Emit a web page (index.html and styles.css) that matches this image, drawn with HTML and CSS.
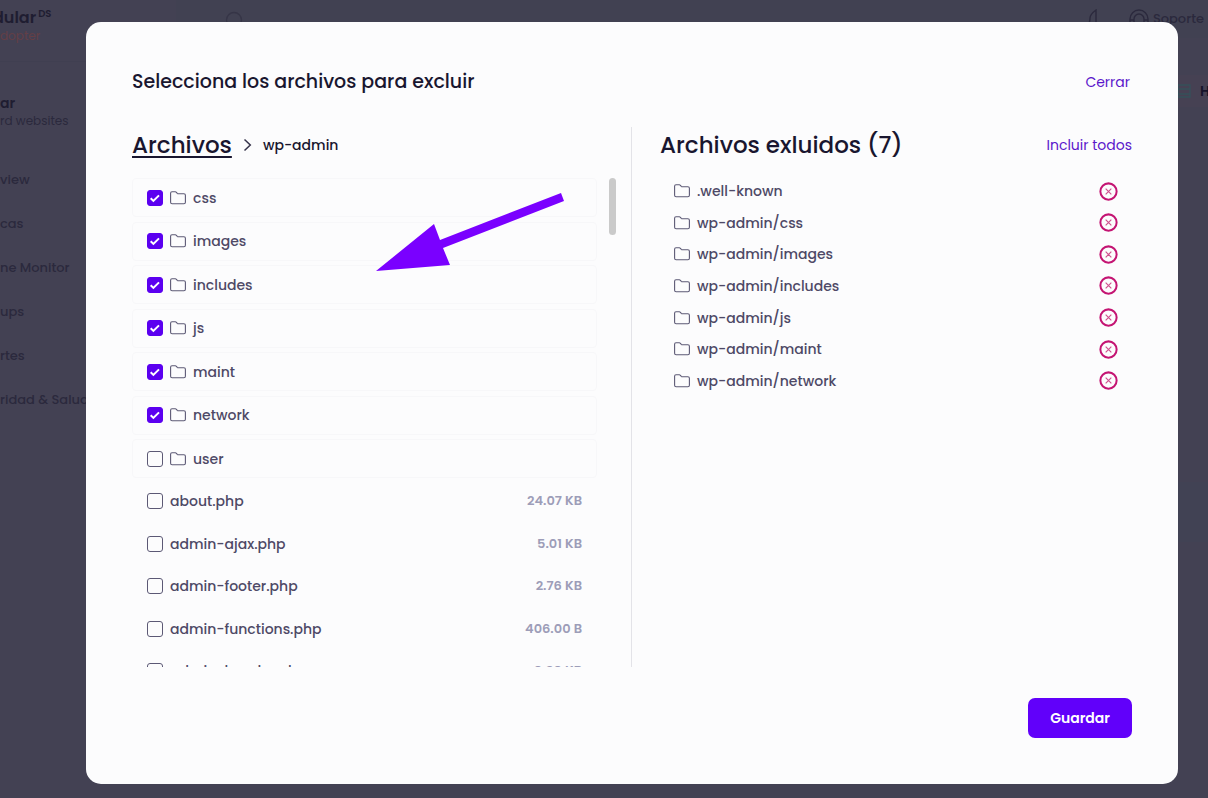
FILE: index.html
```html
<!DOCTYPE html>
<html lang="es">
<head>
<meta charset="utf-8">
<meta name="viewport" content="width=device-width, initial-scale=1">
<title>Selecciona los archivos para excluir</title>
<link rel="stylesheet" href="styles.css">
</head>
<body>
<svg class="defs" aria-hidden="true">
  <symbol id="folder" viewBox="0 0 16 14"><path d="M.6 11.2V2.3C.6 1.4 1.2.8 2 .8h3.3c.5 0 .8.2 1.1.5l.9 1c.3.3.6.4 1 .4h5.6c.9 0 1.5.6 1.5 1.5v7c0 .9-.6 1.6-1.5 1.6H2.1c-.9 0-1.5-.7-1.5-1.6z" fill="none" stroke="currentColor" stroke-width="1.1"/></symbol>
  <symbol id="remove" viewBox="0 0 18 18"><circle cx="9" cy="9" r="7.7" fill="none" stroke="#c41573" stroke-width="1.9"/><path d="M6.3 6.3l5.4 5.4M11.7 6.3l-5.4 5.4" fill="none" stroke="#d0528f" stroke-width="1.1"/></symbol>
</svg>

<div class="app">
  <aside class="sidebar">
    <div class="brand"><div class="brand-name">dular<sup>DS</sup></div><div class="brand-tag">dopter</div></div>
    <div class="team"><strong>ar</strong><span>rd websites</span></div>
    <nav class="nav">
      <a href="#">view</a>
      <a href="#">cas</a>
      <a href="#">ne Monitor</a>
      <a href="#">ups</a>
      <a href="#">rtes</a>
      <a href="#">ridad &amp; Salud</a>
    </nav>
  </aside>
  <div class="main">
    <header class="topbar">
      <svg class="search-icon" width="20" height="20" viewBox="0 0 20 20"><circle cx="10" cy="11" r="7.5" fill="none" stroke="currentColor" stroke-width="1.3"/></svg>
      <svg class="bell" width="16" height="20" viewBox="0 0 16 20"><path d="M1 16c3-1 3-4 3-7s2-5 6-8v15" fill="none" stroke="currentColor" stroke-width="1.4"/></svg>
      <a class="support" href="#"><svg width="20" height="20" viewBox="0 0 20 20"><path d="M1 15V10a9 9 0 0 1 18 0v5M5 15v-5a5 5 0 0 1 10 0v5M1 11h4M15 11h4" fill="none" stroke="currentColor" stroke-width="1.4"/></svg>Soporte</a>
    </header>
    <div class="hosting"><svg width="16" height="16" viewBox="0 0 16 16"><path d="M2 2h12v4H2zM2 6h12v5H2zM2 11h12v3H2z" fill="none" stroke="#36505a" stroke-width="1.3"/></svg>Ho</div>
    <div class="panel"></div>
  </div>
</div>

<div class="overlay">
<section class="modal" role="dialog" aria-labelledby="title">
  <header class="modal-head">
    <h1 id="title">Selecciona los archivos para excluir</h1>
    <button class="link head-close" type="button">Cerrar</button>
  </header>
  <div class="columns">
    <div class="col files">
      <div class="col-head crumbs">
        <h2><a href="#">Archivos</a></h2>
        <svg width="9" height="14" viewBox="0 0 9 14"><path d="M1.5 1.5L7.3 7l-5.8 5.5" fill="none" stroke="#35324a" stroke-width="1.5"/></svg>
        <span>wp-admin</span>
      </div>
      <div class="browser">
        <div class="list">
          <div class="folders">
            <label class="row folder"><input type="checkbox" checked><svg><use href="#folder"/></svg><span>css</span></label>
            <label class="row folder"><input type="checkbox" checked><svg><use href="#folder"/></svg><span>images</span></label>
            <label class="row folder"><input type="checkbox" checked><svg><use href="#folder"/></svg><span>includes</span></label>
            <label class="row folder"><input type="checkbox" checked><svg><use href="#folder"/></svg><span>js</span></label>
            <label class="row folder"><input type="checkbox" checked><svg><use href="#folder"/></svg><span>maint</span></label>
            <label class="row folder"><input type="checkbox" checked><svg><use href="#folder"/></svg><span>network</span></label>
            <label class="row folder"><input type="checkbox"><svg><use href="#folder"/></svg><span>user</span></label>
          </div>
          <div class="documents">
            <label class="row file"><input type="checkbox"><span>about.php</span><span class="size">24.07 KB</span></label>
            <label class="row file"><input type="checkbox"><span>admin-ajax.php</span><span class="size">5.01 KB</span></label>
            <label class="row file"><input type="checkbox"><span>admin-footer.php</span><span class="size">2.76 KB</span></label>
            <label class="row file"><input type="checkbox"><span>admin-functions.php</span><span class="size">406.00 B</span></label>
            <label class="row file"><input type="checkbox"><span>admin-header.php</span><span class="size">8.98 KB</span></label>
          </div>
        </div>
        <div class="track"><div class="thumb"></div></div>
        <svg class="arrow" width="188" height="79" viewBox="0 0 188 79"><path d="M0 78L58 31L64 47L185 0L188 8L67 55L74 72Z" fill="#7a00ff"/></svg>
      </div>
    </div>
    <div class="col excluded">
      <div class="col-head">
        <h2>Archivos exluidos (7)</h2>
        <button class="link" type="button">Incluir todos</button>
      </div>
      <ul>
        <li><svg><use href="#folder"/></svg><span>.well-known</span><button type="button" aria-label="Incluir .well-known"><svg><use href="#remove"/></svg></button></li>
        <li><svg><use href="#folder"/></svg><span>wp-admin/css</span><button type="button" aria-label="Incluir css"><svg><use href="#remove"/></svg></button></li>
        <li><svg><use href="#folder"/></svg><span>wp-admin/images</span><button type="button" aria-label="Incluir images"><svg><use href="#remove"/></svg></button></li>
        <li><svg><use href="#folder"/></svg><span>wp-admin/includes</span><button type="button" aria-label="Incluir includes"><svg><use href="#remove"/></svg></button></li>
        <li><svg><use href="#folder"/></svg><span>wp-admin/js</span><button type="button" aria-label="Incluir js"><svg><use href="#remove"/></svg></button></li>
        <li><svg><use href="#folder"/></svg><span>wp-admin/maint</span><button type="button" aria-label="Incluir maint"><svg><use href="#remove"/></svg></button></li>
        <li><svg><use href="#folder"/></svg><span>wp-admin/network</span><button type="button" aria-label="Incluir network"><svg><use href="#remove"/></svg></button></li>
      </ul>
    </div>
  </div>
  <footer><button class="save" type="button">Guardar</button></footer>
</section>
</div>
</body>
</html>
```
FILE: styles.css
```css
* { box-sizing: border-box; }
body {
  margin: 0;
  font-family: Poppins, Inter, sans-serif;
  font-size: 14px;
  line-height: 20px;
  font-weight: 500;
  color: #4e4966;
  background: #434153;
  overflow: hidden;
}
h1, h2, ul { margin: 0; padding: 0; font-weight: 500; }
button { font: inherit; border: 0; background: none; padding: 0; cursor: pointer; }
a { color: inherit; text-decoration: none; }
.defs { position: absolute; width: 0; height: 0; }

/* Dimmed application behind the dialog */
.app { display: flex; height: 100vh; font-size: 13px; color: #2b293d; }
.sidebar { flex: 0 0 176px; white-space: nowrap; }
.brand { height: 62px; padding-top: 8px; border-bottom: 1px solid #403f51; }
.brand-name { font-size: 16px; font-weight: 600; text-indent: -7px; color: #1f1d31; }
.brand-name sup { font-size: 10px; margin-left: 2px; line-height: 0; }
.brand-tag { font-size: 12px; font-weight: 400; line-height: 16px; color: #643f46; }
.team { display: flex; flex-direction: column; padding: 31px 0 41px; }
.team strong { font-size: 14px; font-weight: 600; color: #1f1d31; }
.team span { font-size: 12px; line-height: 16px; font-weight: 400; }
.nav { display: flex; flex-direction: column; gap: 24px; }
.main { flex: 1; }
.topbar { display: flex; align-items: center; height: 38px; padding-left: 48px; background: #414152; }
.search-icon { color: #363547; }
.bell { margin-left: auto; margin-right: 27px; }
.support { display: flex; gap: 4px; align-items: center; padding-right: 4px; }
.hosting { display: flex; justify-content: flex-end; align-items: center; gap: 8px; height: 32px; margin-top: 37px; margin-right: -11px; font-size: 14px; font-weight: 600; color: #15132a; background: #464153; }
.panel { height: 60px; margin-top: 375px; background: #414254; }

/* Dialog */
.overlay { position: fixed; inset: 0; display: flex; padding: 22px 30px 14px 86px; }
.modal { flex: 1; min-width: 0; display: flex; flex-direction: column; gap: 31px; padding: 46px; border-radius: 15px; background: #fcfcfd; }
.modal-head { display: flex; justify-content: space-between; align-items: center; }
h1 { font-size: 19px; line-height: 28px; color: #19162f; }
h2 { font-size: 23px; line-height: 32px; color: #19162f; }
.link { font-weight: 400; color: #5b17cb; }
.head-close { margin-right: 2px; }
.columns { flex: 1; min-height: 0; display: grid; grid-template-columns: 1fr 1fr; }
.col { display: flex; flex-direction: column; min-height: 0; }
.col-head { display: flex; align-items: center; justify-content: space-between; height: 36px; margin-bottom: 15px; }
.crumbs { justify-content: flex-start; gap: 11px; color: #19162f; }
.crumbs a { text-decoration: underline; text-decoration-thickness: 2px; text-underline-offset: 3px; }
.files { padding-right: 15px; border-right: 1px solid #e3e3e8; }
.browser { position: relative; display: flex; gap: 12px; flex: 1; min-height: 0; }
.list { flex: 1; overflow-y: auto; scrollbar-width: none; }
.track { width: 7px; }
.thumb { height: 57px; border-radius: 4px; background: #cacaca; }
.arrow { position: absolute; left: 244px; top: 15px; }
.folders, .documents { display: flex; flex-direction: column; justify-content: space-between; }
.folders { min-height: 300px; margin-bottom: 2px; }
.documents { min-height: 212px; }
.row { display: flex; align-items: center; gap: 7px; padding: 0 15px; }
.row svg, li > svg { flex: none; width: 16px; height: 14px; color: #5c5975; }
.folder { height: 39px; padding-left: 14px; border: 1px solid #f7f7f9; border-radius: 4px; }
.file { height: 42px; }
.size { margin-left: auto; font-size: 13px; font-weight: 600; color: #9d9db8; }
input {
  appearance: none;
  flex: none;
  width: 16px;
  height: 16px;
  margin: 0;
  border: 1px solid #5c5975;
  border-radius: 3px;
}
input:checked {
  border-color: #5b00f0;
  background: #5b00f0 url("data:image/svg+xml,%3Csvg xmlns='http://www.w3.org/2000/svg' viewBox='0 0 14 14'%3E%3Cpath d='M2.7 7.2l2.7 2.7 5.6-5.5' fill='none' stroke='white' stroke-width='2'/%3E%3C/svg%3E") center / 14px no-repeat;
}
.excluded { padding-left: 28px; }
ul { display: flex; flex-direction: column; justify-content: space-between; min-height: 216px; list-style: none; padding: 0 14px; }
li { display: flex; align-items: center; gap: 7px; height: 26px; }
li button { display: flex; margin-left: auto; }
li button svg { width: 19px; height: 19px; }
footer { display: flex; justify-content: flex-end; }
.save { height: 40px; padding: 0 22px; border-radius: 7px; font-weight: 600; color: #fff; background: #6100fa; }
```
